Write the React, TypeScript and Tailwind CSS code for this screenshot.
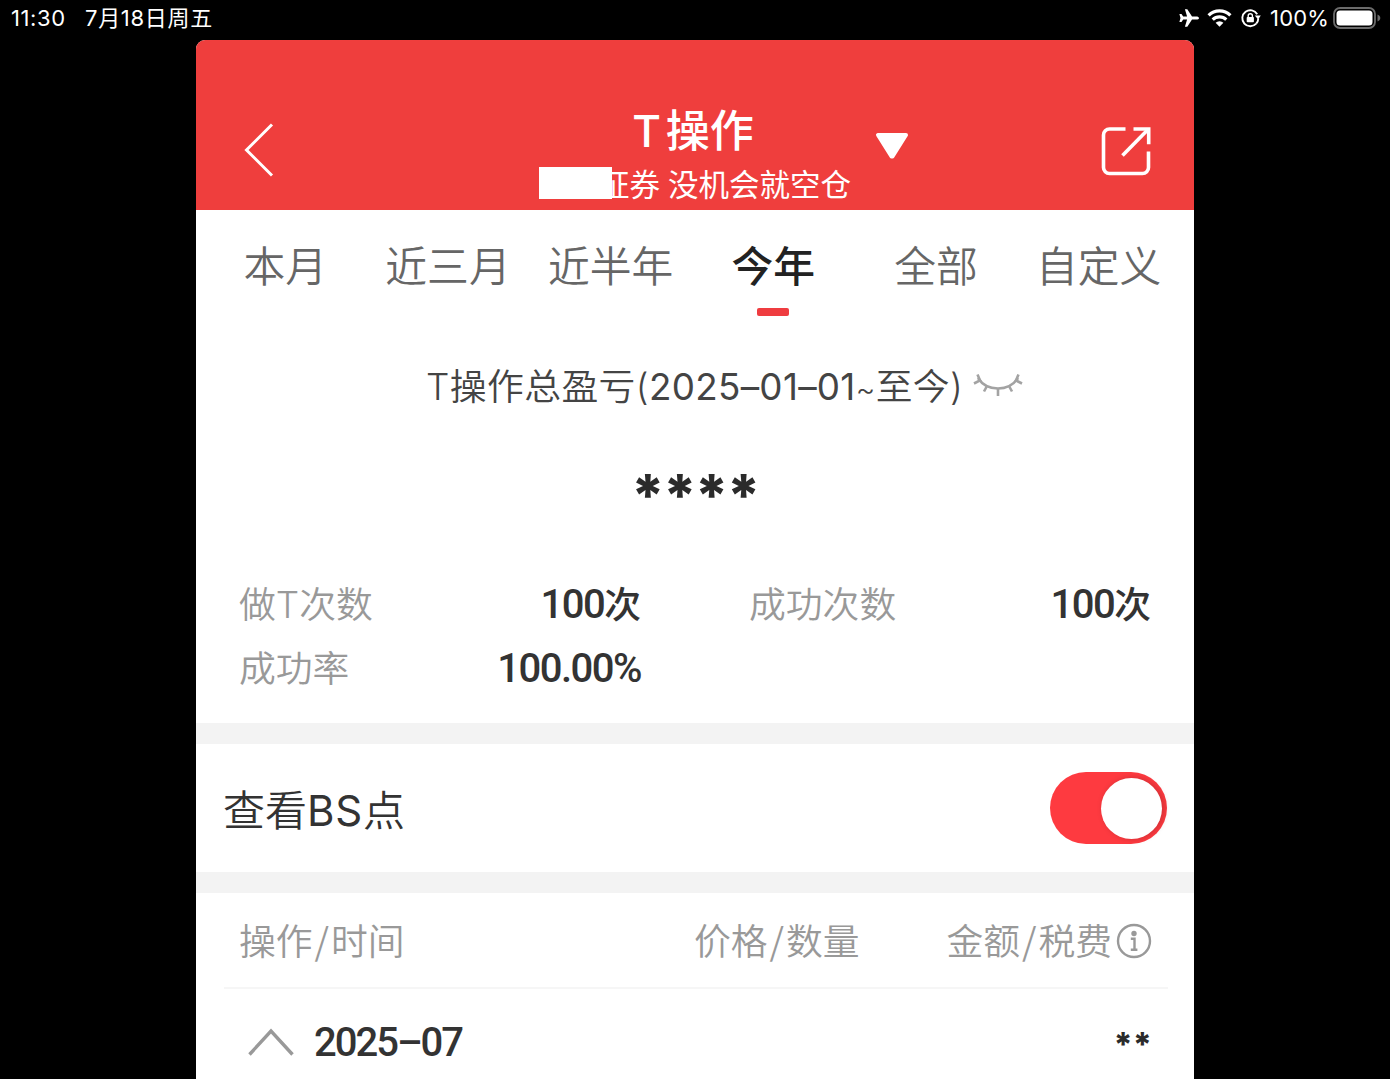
import React, { useState } from 'react';

const tabs = ['本月', '近三月', '近半年', '今年', '全部', '自定义'];

const StatusBar: React.FC = () => (
  <div className="flex h-10 items-center bg-black pl-[11px] pr-[9px] pb-1 text-[22px] leading-9 text-white">
    <span className="w-[74px] tracking-[0.6px]">11:30</span>
    <span className="tracking-[0.7px]">7月18日周五</span>
    <div className="ml-auto flex items-center">
      {/* Airplane */}
      <svg className="h-[20px] w-[20px]" viewBox="0 0 20 20" fill="white">
        <path d="M20 10c0 .9-1.2 1.600-2.800 1.600h-4.200L8.300 18.800H5.900l2.200-7.200H4.200L2.500 13.900H.4L1.500 10 .4 6.100h2.100l1.700 2.300h3.900L5.900 1.200h2.400l4.700 7.200h4.200c1.600 0 2.800.7 2.800 1.600z" />
      </svg>
      {/* Wifi */}
      <svg className="ml-[8px] h-[20px] w-[25px]" viewBox="0 0 25 20" fill="none" stroke="white" strokeWidth="3.200">
        <path d="M1.600 7.400a15.500 15.500 0 0 1 21.800 0" />
        <path d="M5.700 11.700a9.700 9.700 0 0 1 13.600 0" />
        <path d="M12.500 18.700l-3.900-3.900a5.500 5.500 0 0 1 7.800 0z" fill="white" stroke="none" />
      </svg>
      {/* Orientation lock */}
      <svg className="ml-[9px] h-[20px] w-[20px]" viewBox="0 0 20 20" fill="none" stroke="white" strokeWidth="1.900">
        <path d="M16.200 6.200A8 8 0 1 0 15.200 15.700" />
        <path d="M17.300 10.500A8 8 0 0 1 15.200 15.700" />
        <path d="M13.800 7.400h6l-2.700 4.200z" fill="white" stroke="none" />
        <rect x="5.700" y="8.900" width="7.200" height="5.400" rx="0.800" fill="white" stroke="none" />
        <path d="M7.200 9.500V7.800a2.100 2.100 0 0 1 4.200 0v1.700" strokeWidth="1.400" />
      </svg>
      <span className="ml-[9px] w-[63px] tracking-[0.2px]">100%</span>
      {/* Battery */}
      <svg className="h-[22px] w-[48px]" viewBox="0 0 48 22" fill="none">
        <rect x="1" y="1" width="41" height="20" rx="6" stroke="#6b6b6b" strokeWidth="1.800" />
        <rect x="3.500" y="3.500" width="36" height="15" rx="3.500" fill="white" />
        <path d="M44.500 7.500c2 .8 2.800 2 2.800 3.500s-.8 2.700-2.800 3.500z" fill="#6b6b6b" />
      </svg>
    </div>
  </div>
);

const Header: React.FC = () => (
  <header className="grid h-[170px] grid-cols-[343px_311px_1fr] rounded-t-[9px] bg-[#ef3e3d] text-white">
    <div className="pl-[47px] pt-[83px]">
      <svg className="h-[54px] w-[32px]" viewBox="0 0 32 54" fill="none" stroke="white" strokeWidth="3">
        <path d="M29 1.500L3.500 27 29 52.500" />
      </svg>
    </div>
    <div className="flex flex-col pt-[66px]">
      <h1 className="flex h-[50px] items-center justify-center pr-[3px] text-[44px] font-medium leading-[50px]">
        <span className="mr-[5px]">T</span>操作
      </h1>
      <div className="mt-[11px] flex h-8 items-center text-[30.500px] leading-8">
        <span className="relative h-8 w-[73px] shrink-0 bg-white" />
        <span className="-ml-[13px] whitespace-pre pt-[3px]">
          证券<span className="inline-block w-[8px]"> </span>没机会就空仓
        </span>
      </div>
    </div>
    <div className="flex justify-between pl-[25px] pr-[43px]">
      <svg className="mt-[92px] h-[28px] w-[34px]" viewBox="0 0 34 28" fill="white" stroke="white" strokeWidth="4" strokeLinejoin="round">
        <path d="M3 3h28L17.500 24.500h-1z" />
      </svg>
      <svg className="mt-[86px] h-[50px] w-[50px]" viewBox="0 0 50 50" fill="none" stroke="white" strokeWidth="3.600">
        <path d="M24.500 3H8.500a6 6 0 0 0-6 6v32.500a6 6 0 0 0 6 6h33a6 6 0 0 0 6-6V25.500" />
        <path d="M32.500 3h15.200v15.200" />
        <path d="M47 3.500L21.500 29.500" />
      </svg>
    </div>
  </header>
);

interface StatProps {
  label: string;
  value: string;
  unit?: string;
}

const Stat: React.FC<StatProps> = ({ label, value, unit }) => (
  <div className="flex h-16 items-center justify-between leading-[64px]">
    <span className="text-[36.800px] font-[350] text-[#999]">{label}</span>
    <span className="flex items-center text-[36.800px] font-medium text-[#333]">
      <span className="font-['Roboto'] text-[40px] tracking-[-1.500px]">{value}</span>
      {unit}
    </span>
  </div>
);

const Slash: React.FC = () => <span className="mx-[2px] font-['Noto_Sans_CJK_SC'] leading-none">/</span>;

const App: React.FC = () => {
  const [active, setActive] = useState('今年');
  const [showPoints, setShowPoints] = useState(true);

  return (
    <div className="h-[1079px] w-[1390px] overflow-hidden bg-black font-['Inter','Noto_Sans_CJK_SC',sans-serif]">
      <StatusBar />
      <main className="ml-[196px] h-[1039px] w-[998px] rounded-t-[9px] bg-white">
        <Header />

        {/* Period tabs */}
        <nav className="ml-[8px] grid h-[107px] w-[976px] grid-cols-6">
          {tabs.map((tab) => (
            <button
              key={tab}
              onClick={() => setActive(tab)}
              className={`flex flex-col items-center whitespace-nowrap pt-[32px] text-[41.800px] leading-[50px] ${
                tab === active ? 'font-medium text-[#222]' : 'font-[350] text-[#666]'
              }`}
            >
              {tab}
              {tab === active && <span className="mt-[16px] h-2 w-8 rounded-[2px] bg-[#ef3c40]" />}
            </button>
          ))}
        </nav>

        {/* Total profit */}
        <section className="h-[255px] pt-[45px]">
          <div className="flex h-[50px] items-center pl-[230px] text-[36.800px] leading-[50px] text-[#444]">
            <span className="w-[540px] whitespace-nowrap font-[350] tracking-[0.400px]">
              T操作总盈亏(<span className="font-normal tracking-[0.3px]">2025–01–01</span>
              <span className="text-[30px] leading-none">~</span>至今)
            </span>
            <svg className="-mt-[6px] ml-[7px] h-[26px] w-[50px]" viewBox="0 0 50 26" fill="none" stroke="#a3a3a3" strokeWidth="2.600">
              <path d="M5 7C14 21 36 21 45 7" />
              <path d="M1 12.500l6-3-2.500-6M49 12.500l-6-3 2.500-6M14 15l-3 5.500M25 17.500V25M36 15l3 5.500" />
            </svg>
          </div>
          <p className="mt-[53px] pl-[435px] text-[58px] font-extrabold leading-[60px] tracking-[-1.900px] text-[#2b2b2b]">****</p>
        </section>

        <section className="grid h-[151px] grid-cols-[402px_402px] content-start gap-x-[108px] pl-[43px] pt-px">
          <Stat label="做T次数" value="100" unit="次" />
          <Stat label="成功次数" value="100" unit="次" />
          <Stat label="成功率" value="100.00%" />
        </section>

        <section className="flex h-[170px] items-center justify-between border-y-[21px] border-[#f3f3f3] pl-[27px] pr-[27px]">
          <span className="pt-[4px] text-[42px] font-[350] text-[#333]">
            查看<span className="font-normal tracking-[0.8px]">BS</span>点
          </span>
          <button
            onClick={() => setShowPoints(!showPoints)}
            className={`flex h-[72px] w-[117px] items-center rounded-full px-[5px] ${
              showPoints ? 'justify-end bg-[#fe3a40]' : 'justify-start bg-gray-300'
            }`}
          >
            <span className="h-[61px] w-[61px] rounded-full bg-white shadow-[2px_0_6px_rgba(0,0,0,0.200)]" />
          </button>
        </section>

        {/* Operation list */}
        <section className="ml-[28px] w-[944px]">
          <div className="flex h-[96px] items-center border-b-2 border-[#f6f6f6] pl-[15px] pr-[16px] pt-[3px] text-[36.800px] font-[350] text-[#999]">
            <span className="w-[455px]">操作<Slash />时间</span>
            <span>价格<Slash />数量</span>
            <span className="ml-auto mr-[4px]">金额<Slash />税费</span>
            <svg className="-mt-[2px] h-[36px] w-[36px]" viewBox="0 0 36 36" fill="none" stroke="#999" strokeWidth="2.400">
              <circle cx="18" cy="18" r="16" />
              <circle cx="18" cy="10.500" r="2.700" fill="#999" stroke="none" />
              <path d="M14.800 15.800h3.700v10.700M14.800 26.800h6.600" />
            </svg>
          </div>
          <div className="flex h-[106px] items-center pl-[24px] pr-[16px] text-[#333]">
            <svg className="h-[28px] w-[46px]" viewBox="0 0 46 28" fill="none" stroke="#999" strokeWidth="3.400">
              <path d="M1.500 26.500L23 3l21.500 23.500" />
            </svg>
            <span className="ml-[20px] pt-[2px] font-['Roboto'] text-[40px] font-medium tracking-[-2px]">2025–07</span>
            <span className="ml-auto pt-[5px] text-[33px] font-extrabold text-[#2b2b2b]">**</span>
          </div>
        </section>
      </main>
    </div>
  );
};

export default App;
